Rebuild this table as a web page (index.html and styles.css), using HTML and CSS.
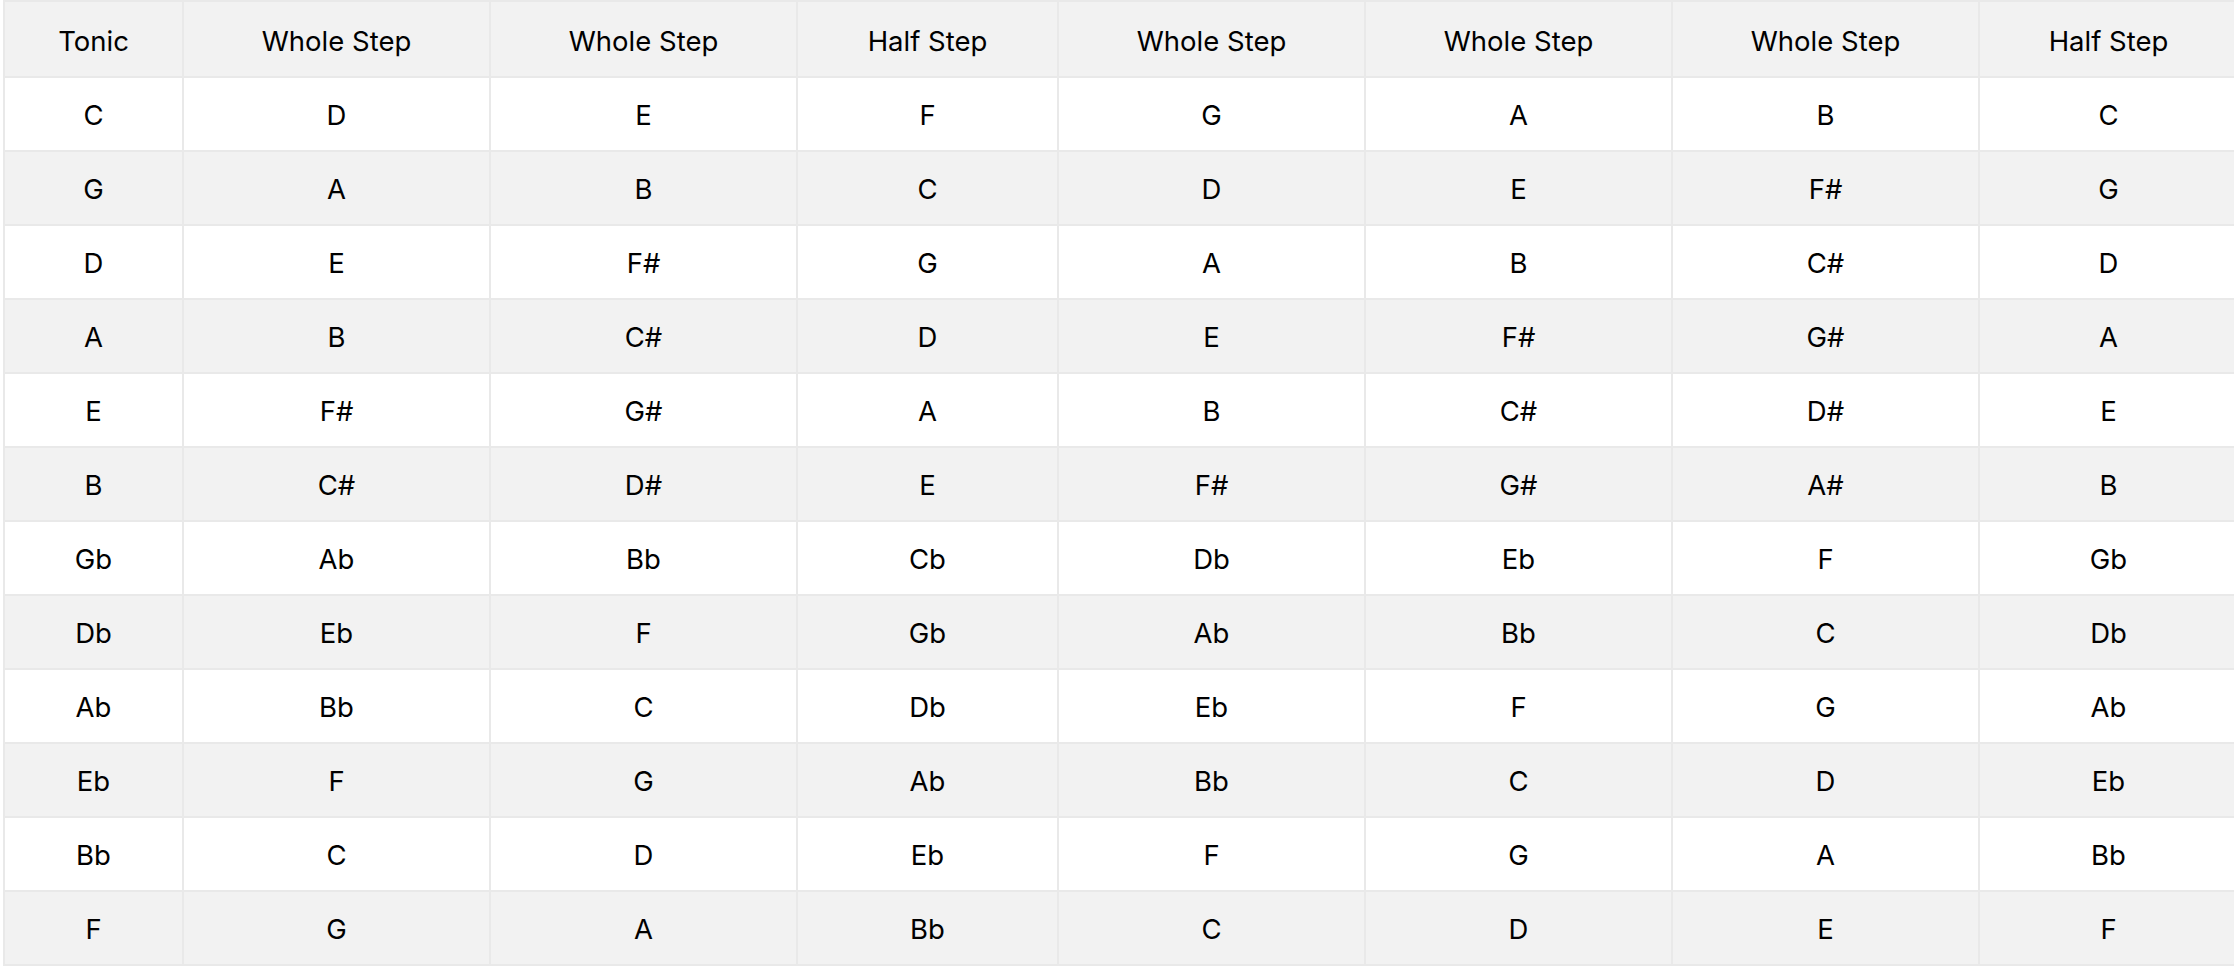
FILE: index.html
```html
<!DOCTYPE html>
<html>
<head>
<meta charset="utf-8">
<link rel="stylesheet" href="styles.css">
</head>
<body>
<table class="scale">
<colgroup>
<col class="c-tonic"><col class="c-whole"><col class="c-whole"><col class="c-half"><col class="c-whole"><col class="c-whole"><col class="c-whole"><col class="c-last">
</colgroup>
<thead>
<tr><th>Tonic</th><th>Whole Step</th><th>Whole Step</th><th>Half Step</th><th>Whole Step</th><th>Whole Step</th><th>Whole Step</th><th>Half Step</th></tr>
</thead>
<tbody>
<tr><td>C</td><td>D</td><td>E</td><td>F</td><td>G</td><td>A</td><td>B</td><td>C</td></tr>
<tr><td>G</td><td>A</td><td>B</td><td>C</td><td>D</td><td>E</td><td>F#</td><td>G</td></tr>
<tr><td>D</td><td>E</td><td>F#</td><td>G</td><td>A</td><td>B</td><td>C#</td><td>D</td></tr>
<tr><td>A</td><td>B</td><td>C#</td><td>D</td><td>E</td><td>F#</td><td>G#</td><td>A</td></tr>
<tr><td>E</td><td>F#</td><td>G#</td><td>A</td><td>B</td><td>C#</td><td>D#</td><td>E</td></tr>
<tr><td>B</td><td>C#</td><td>D#</td><td>E</td><td>F#</td><td>G#</td><td>A#</td><td>B</td></tr>
<tr><td>Gb</td><td>Ab</td><td>Bb</td><td>Cb</td><td>Db</td><td>Eb</td><td>F</td><td>Gb</td></tr>
<tr><td>Db</td><td>Eb</td><td>F</td><td>Gb</td><td>Ab</td><td>Bb</td><td>C</td><td>Db</td></tr>
<tr><td>Ab</td><td>Bb</td><td>C</td><td>Db</td><td>Eb</td><td>F</td><td>G</td><td>Ab</td></tr>
<tr><td>Eb</td><td>F</td><td>G</td><td>Ab</td><td>Bb</td><td>C</td><td>D</td><td>Eb</td></tr>
<tr><td>Bb</td><td>C</td><td>D</td><td>Eb</td><td>F</td><td>G</td><td>A</td><td>Bb</td></tr>
<tr><td>F</td><td>G</td><td>A</td><td>Bb</td><td>C</td><td>D</td><td>E</td><td>F</td></tr>
</tbody>
</table>
</body>
</html>
```
FILE: styles.css
```css
html, body {
  margin: 0;
  padding: 0;
  background: #ffffff;
}
body {
  padding: 0 0 0 3px;
  font-family: Inter, "Liberation Sans", sans-serif;
  color: #000000;
}
.scale {
  border-collapse: collapse;
  table-layout: fixed;
  width: 2234px;
  font-size: 27.5px;
}
.c-tonic { width: 179px; }
.c-whole { width: 307px; }
.c-half { width: 261px; }
.c-last { width: 259px; }
.scale th,
.scale td {
  border: 2px solid #e9e9e9;
  text-align: center;
  vertical-align: middle;
  padding: 0;
  font-weight: 400;
}
.scale th {
  height: 71px;
  padding-top: 3px;
  background: #f2f2f2;
}
.scale td {
  height: 70px;
  padding-top: 2px;
}
.scale tbody tr:nth-child(even) td {
  background: #f2f2f2;
}
```
